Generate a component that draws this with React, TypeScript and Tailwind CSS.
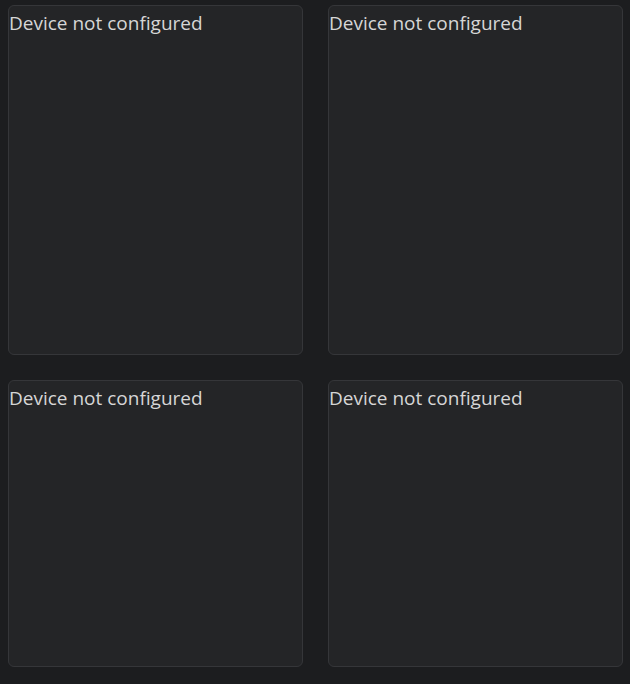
import React from "react";

const DeviceTile: React.FC<{ height: string }> = ({ height }) => (
  <div
    className={`w-[295px] ${height} rounded-[6px] border border-[#353639] bg-[#242527] text-[19px] leading-[35px] text-[#d6d6d6]`}
  >
    Device not configured
  </div>
);

export default function App() {
  return (
    <div
      className="min-h-[684px] w-[630px] bg-[#1c1d1f] pl-[8px] pt-[5px]"
      style={{ fontFamily: '"Open Sans", "Noto Sans", sans-serif' }}
    >
      <div className="flex flex-col gap-[25px]">
        <div className="flex gap-[25px]">
          <DeviceTile height="h-[350px]" />
          <DeviceTile height="h-[350px]" />
        </div>
        <div className="flex gap-[25px]">
          <DeviceTile height="h-[287px]" />
          <DeviceTile height="h-[287px]" />
        </div>
      </div>
    </div>
  );
}
